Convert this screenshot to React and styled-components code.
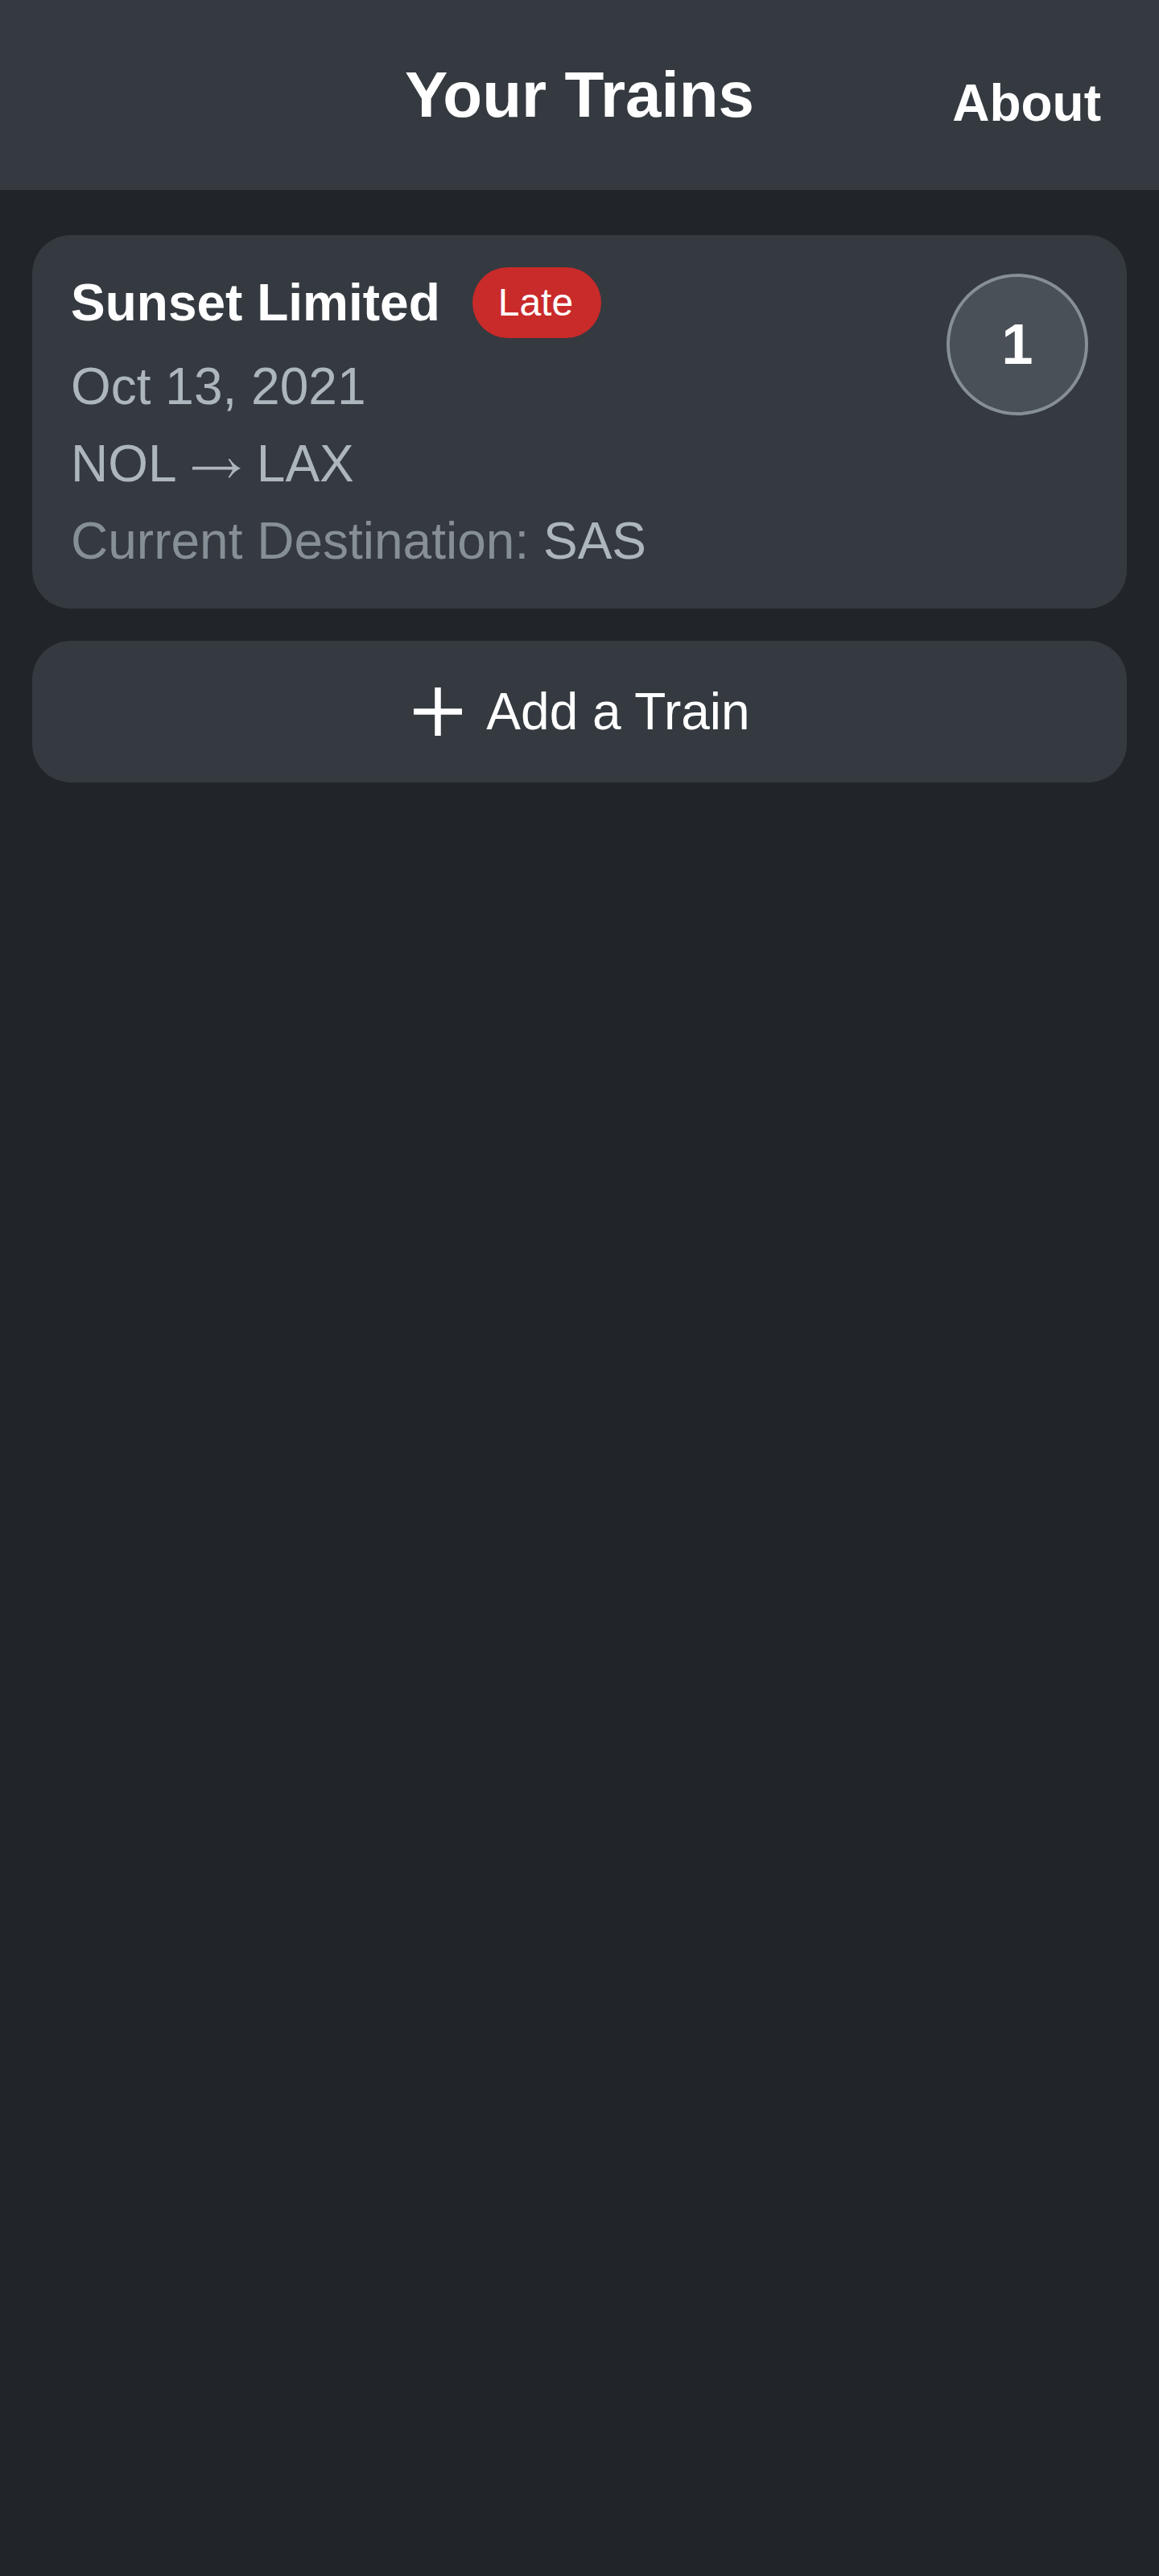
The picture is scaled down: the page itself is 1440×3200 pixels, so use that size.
import React from "react";
import styled, { createGlobalStyle } from "styled-components";

const GlobalStyle = createGlobalStyle`
  *, *::before, *::after { box-sizing: border-box; }
  html { background: #212529; }
  body {
    margin: 0;
    background: #212529;
    color: #ffffff;
    font-family: "Liberation Sans", Arial, sans-serif;
    font-size: 64px;
    line-height: 96px;
  }
`;

const Header = styled.header`
  display: grid;
  grid-template-columns: 1fr auto 1fr;
  align-items: start;
  padding: 58px 72px;
  background: #343a40;
`;

const PageTitle = styled.h1`
  grid-column: 2;
  margin: 0;
  font-size: 80px;
  line-height: 120px;
`;

const Nav = styled.nav`
  justify-self: end;
  padding-top: 22px;
`;

const NavLink = styled.a`
  display: block;
  color: inherit;
  font-weight: 700;
  text-decoration: none;
`;

const Main = styled.main`
  display: flex;
  flex-direction: column;
  gap: 40px;
  padding: 56px 40px;
`;

const TrainCard = styled.article`
  display: flex;
  justify-content: space-between;
  align-items: flex-start;
  padding: 40px 48px 36px;
  border-radius: 48px;
  background: #343a40;
`;

const CardHeading = styled.div`
  display: flex;
  align-items: center;
  gap: 40px;
  margin-bottom: 12px;
`;

const TrainName = styled.h2`
  margin: 0;
  font-size: 64px;
  line-height: 88px;
`;

const StatusBadge = styled.span`
  min-width: 160px;
  padding: 8px 32px;
  border-radius: 44px;
  background: #c92a2a;
  font-size: 48px;
  line-height: 72px;
`;

const Detail = styled.p`
  margin: 0;
  color: #adb5bd;
`;

const Label = styled.span`
  color: #868e96;
`;

const TrainNumber = styled.div`
  display: flex;
  flex: none;
  align-items: center;
  justify-content: center;
  width: 176px;
  height: 176px;
  margin-top: 8px;
  border: 4px solid #868e96;
  border-radius: 50%;
  background: #495057;
  font-size: 70px;
  font-weight: 700;
`;

const AddButton = styled.button`
  display: flex;
  align-items: center;
  justify-content: center;
  gap: 24px;
  padding: 40px 48px;
  border: 0;
  border-radius: 48px;
  background: #343a40;
  color: inherit;
  font: inherit;
  cursor: pointer;
`;

const ArrowIcon = () => (
  <svg width="66" height="32" viewBox="0 0 66 32" fill="currentColor" role="img" aria-label="to">
    <path d="M4 13.800H54Q52 9 48.500 4.500L50.500 4Q56 12 64 15.800Q56 19.500 50.500 27.500L48.500 27Q52 22.500 54 17.600H4Z" />
  </svg>
);

const PlusIcon = () => (
  <svg width="72" height="72" viewBox="0 0 72 72" fill="none" stroke="currentColor" strokeWidth="7.5" aria-hidden="true">
    <path d="M36 6v60M6 36h60" />
  </svg>
);

const trains = [
  {
    name: "Sunset Limited",
    status: "Late",
    date: "Oct 13, 2021",
    from: "NOL",
    to: "LAX",
    destination: "SAS",
    number: 1,
  },
];

export default function App() {
  return (
    <>
      <GlobalStyle />
      <Header>
        <PageTitle>Your Trains</PageTitle>
        <Nav>
          <NavLink href="#about">About</NavLink>
        </Nav>
      </Header>
      <Main>
        {trains.map((train) => (
          <TrainCard key={train.number}>
            <div>
              <CardHeading>
                <TrainName>{train.name}</TrainName>
                <StatusBadge>{train.status}</StatusBadge>
              </CardHeading>
              <Detail>{train.date}</Detail>
              <Detail>
                {train.from} <ArrowIcon /> {train.to}
              </Detail>
              <Detail>
                <Label>Current Destination:</Label> {train.destination}
              </Detail>
            </div>
            <TrainNumber>{train.number}</TrainNumber>
          </TrainCard>
        ))}
        <AddButton type="button">
          <PlusIcon />
          Add a Train
        </AddButton>
      </Main>
    </>
  );
}
